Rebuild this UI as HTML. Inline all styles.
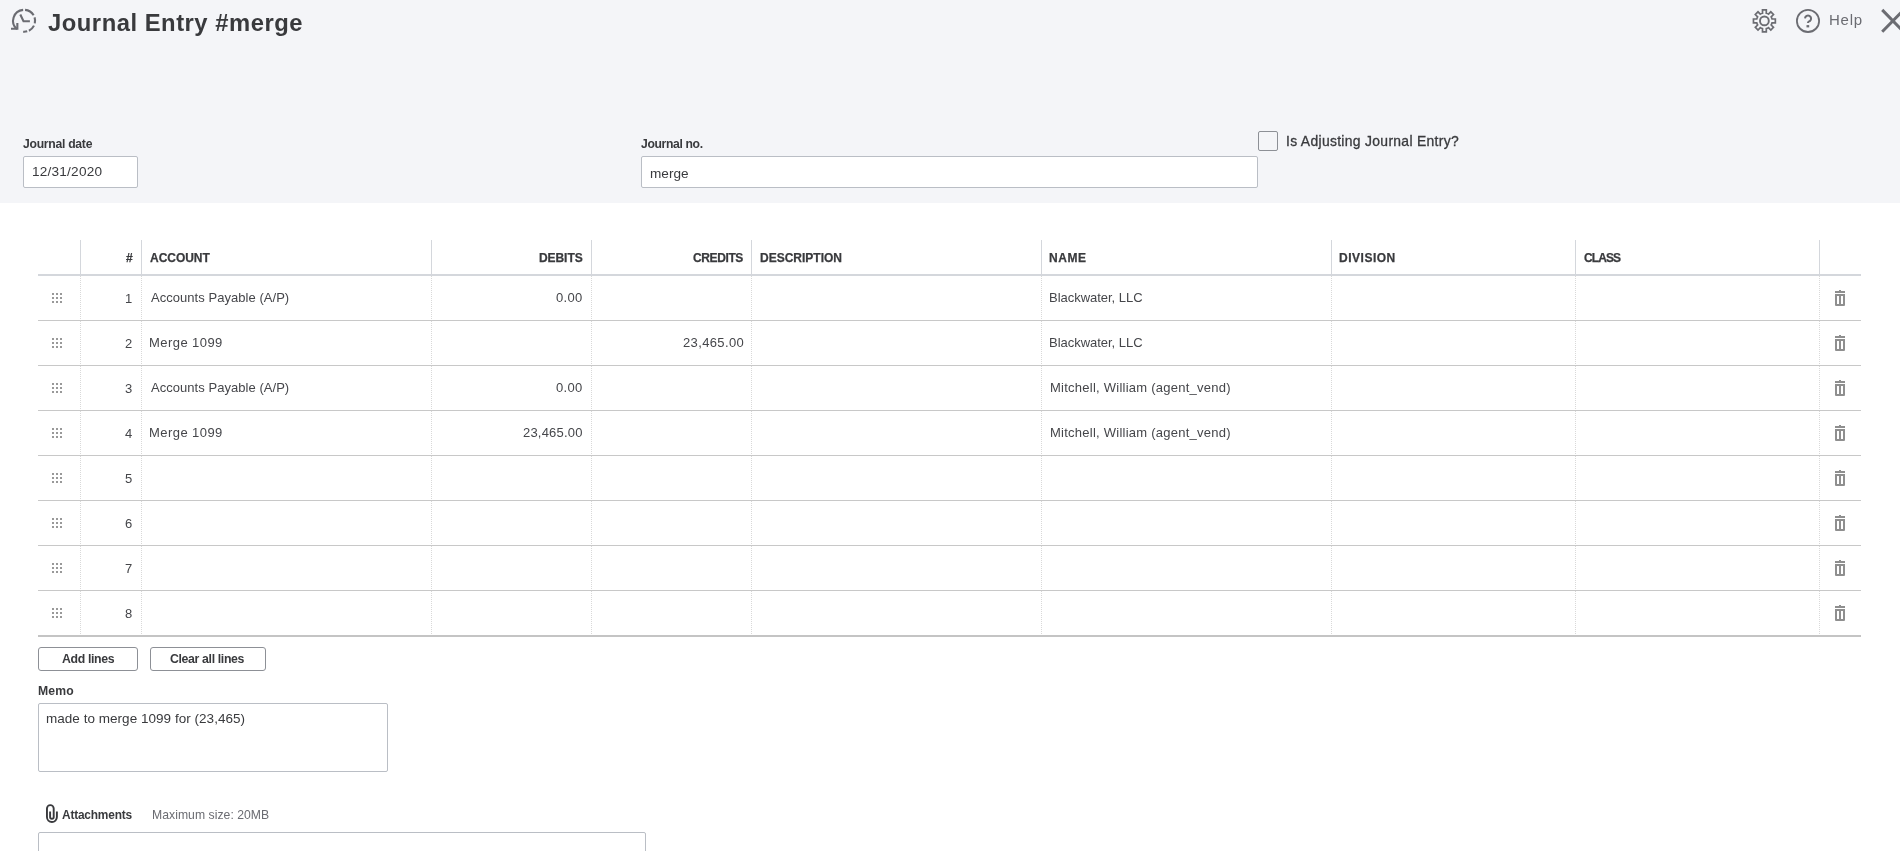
<!DOCTYPE html>
<html><head><meta charset="utf-8">
<style>
*{box-sizing:border-box;margin:0;padding:0}
html,body{width:1900px;height:851px;overflow:hidden;background:#fff;font-family:"Liberation Sans",sans-serif;color:#393a3d}
.abs{position:absolute}
#top{position:absolute;left:0;top:0;width:1900px;height:203px;background:#f4f5f8}
.t{position:absolute;white-space:nowrap;line-height:1;will-change:transform}
.title{left:49px;top:12px;font-size:24.9px;font-weight:bold;color:#393a3d}
.lbl{font-size:11.6px;font-weight:bold;color:#393a3d}
.inp{position:absolute;background:#fff;border:1px solid #babec5;border-radius:2px}
.inpt{font-size:13.6px;color:#393a3d}
.hl{position:absolute;background:#dcdfe4}
.th{position:absolute;top:252px;font-size:11.8px;font-weight:bold;color:#393a3d;white-space:nowrap;line-height:1}
.td{position:absolute;font-size:13px;color:#393a3d;white-space:nowrap;line-height:1}
.dl{position:absolute;width:1px;background-image:linear-gradient(#d9d9d9 50%,transparent 50%);background-size:1px 2px}
.btn{position:absolute;top:647px;height:24px;border:1px solid #8d9096;border-radius:3px;background:#fff}
</style></head><body>
<div id="top"></div>

<!-- history icon -->
<svg class="abs" style="left:0;top:0" width="50" height="45" viewBox="0 0 50 45"><g fill="none" stroke="#6b6c72" stroke-width="2.1">
<path d="M23.14 9.84A11 11 0 0 0 17.03 29.23"/><path d="M25.06 9.84A11 11 0 0 1 33.63 15.30M34.56 17.40A11 11 0 0 1 34.80 23.37M33.99 25.62A11 11 0 0 1 28.92 30.69M27.21 31.35A11 11 0 0 1 23.14 31.76"/><path d="M17.35 23.1V28.8H11"/><path d="M20.3 14.5L23.5 21.3H29.9"/></g></svg>


<!-- right icons -->
<svg class="abs" style="left:1740px;top:0" width="160" height="45" viewBox="1740 0 160 45"><g fill="none" stroke="#6b6c72">
<path stroke-width="1.7" d="M1762.50 13.23L1762.50 9.96L1766.30 9.96L1766.30 13.23A7.9 7.9 0 0 1 1768.48 14.13L1770.79 11.82L1773.48 14.51L1771.17 16.82A7.9 7.9 0 0 1 1772.07 19.00L1775.34 19.00L1775.34 22.80L1772.07 22.80A7.9 7.9 0 0 1 1771.17 24.98L1773.48 27.29L1770.79 29.98L1768.48 27.67A7.9 7.9 0 0 1 1766.30 28.57L1766.30 31.84L1762.50 31.84L1762.50 28.57A7.9 7.9 0 0 1 1760.32 27.67L1758.01 29.98L1755.32 27.29L1757.63 24.98A7.9 7.9 0 0 1 1756.73 22.80L1753.46 22.80L1753.46 19.00L1756.73 19.00A7.9 7.9 0 0 1 1757.63 16.82L1755.32 14.51L1758.01 11.82L1760.32 14.13A7.9 7.9 0 0 1 1762.50 13.23Z"/><circle cx="1764.4" cy="20.9" r="4.4" stroke-width="1.9"/>
<circle cx="1808" cy="20.9" r="11.1" stroke-width="1.8"/>
<path stroke-width="2" d="M1805 18.3A3.05 3.05 0 1 1 1810 20.9C1808.5 21.8 1807.9 22 1807.9 23.1"/>
<path stroke-width="3" d="M1882.2 9.9L1903.6 31.7M1882.2 31.7L1903.6 9.9"/></g>
<rect x="1806.5" y="25.1" width="2.7" height="2.3" fill="#6b6c72"/></svg>

<div class="inp" style="left:23px;top:156px;width:115px;height:32px"></div>

<div class="inp" style="left:641px;top:156px;width:617px;height:32px"></div>

<div class="inp" style="left:1258px;top:131px;width:20px;height:20px;border-radius:2px;background:transparent;border-color:#8d9096"></div>

<div class="hl" style="left:80px;top:240px;width:1px;height:34px;background:#d4d7dc"></div>
<div class="hl" style="left:141px;top:240px;width:1px;height:34px;background:#d4d7dc"></div>
<div class="hl" style="left:431px;top:240px;width:1px;height:34px;background:#d4d7dc"></div>
<div class="hl" style="left:591px;top:240px;width:1px;height:34px;background:#d4d7dc"></div>
<div class="hl" style="left:751px;top:240px;width:1px;height:34px;background:#d4d7dc"></div>
<div class="hl" style="left:1041px;top:240px;width:1px;height:34px;background:#d4d7dc"></div>
<div class="hl" style="left:1331px;top:240px;width:1px;height:34px;background:#d4d7dc"></div>
<div class="hl" style="left:1575px;top:240px;width:1px;height:34px;background:#d4d7dc"></div>
<div class="hl" style="left:1819px;top:240px;width:1px;height:34px;background:#d4d7dc"></div>
<div class="hl" style="left:38px;top:274px;width:1823px;height:2px;background:#d4d7dc"></div>
<div class="dl" style="left:80px;top:276px;height:44px"></div>
<div class="dl" style="left:141px;top:276px;height:44px"></div>
<div class="dl" style="left:431px;top:276px;height:44px"></div>
<div class="dl" style="left:591px;top:276px;height:44px"></div>
<div class="dl" style="left:751px;top:276px;height:44px"></div>
<div class="dl" style="left:1041px;top:276px;height:44px"></div>
<div class="dl" style="left:1331px;top:276px;height:44px"></div>
<div class="dl" style="left:1575px;top:276px;height:44px"></div>
<div class="dl" style="left:1819px;top:276px;height:44px"></div>
<div class="hl" style="left:38px;top:320px;width:1823px;height:1px;background:#c8c8c8"></div>
<svg class="abs" style="left:52px;top:293px" width="10" height="10" viewBox="0 0 10 10"><g fill="#999"><rect x="0" y="0" width="2" height="2"/><rect x="0" y="4" width="2" height="2"/><rect x="0" y="8" width="2" height="2"/><rect x="4" y="0" width="2" height="2"/><rect x="4" y="4" width="2" height="2"/><rect x="4" y="8" width="2" height="2"/><rect x="8" y="0" width="2" height="2"/><rect x="8" y="4" width="2" height="2"/><rect x="8" y="8" width="2" height="2"/></g></svg>
<svg class="abs" style="left:1834px;top:289px" width="12" height="18" viewBox="0 0 12 18"><g fill="#8f8f8f"><rect x="1" y="2" width="10" height="2"/><rect x="5" y="1" width="2" height="1"/><path d="M1 5h10v11a1 1 0 0 1-1 1H2a1 1 0 0 1-1-1z M3 7v8h2V7z M7 7v8h2V7z" fill-rule="evenodd"/></g></svg>
<div class="dl" style="left:80px;top:321px;height:44px"></div>
<div class="dl" style="left:141px;top:321px;height:44px"></div>
<div class="dl" style="left:431px;top:321px;height:44px"></div>
<div class="dl" style="left:591px;top:321px;height:44px"></div>
<div class="dl" style="left:751px;top:321px;height:44px"></div>
<div class="dl" style="left:1041px;top:321px;height:44px"></div>
<div class="dl" style="left:1331px;top:321px;height:44px"></div>
<div class="dl" style="left:1575px;top:321px;height:44px"></div>
<div class="dl" style="left:1819px;top:321px;height:44px"></div>
<div class="hl" style="left:38px;top:365px;width:1823px;height:1px;background:#c8c8c8"></div>
<svg class="abs" style="left:52px;top:338px" width="10" height="10" viewBox="0 0 10 10"><g fill="#999"><rect x="0" y="0" width="2" height="2"/><rect x="0" y="4" width="2" height="2"/><rect x="0" y="8" width="2" height="2"/><rect x="4" y="0" width="2" height="2"/><rect x="4" y="4" width="2" height="2"/><rect x="4" y="8" width="2" height="2"/><rect x="8" y="0" width="2" height="2"/><rect x="8" y="4" width="2" height="2"/><rect x="8" y="8" width="2" height="2"/></g></svg>
<svg class="abs" style="left:1834px;top:334px" width="12" height="18" viewBox="0 0 12 18"><g fill="#8f8f8f"><rect x="1" y="2" width="10" height="2"/><rect x="5" y="1" width="2" height="1"/><path d="M1 5h10v11a1 1 0 0 1-1 1H2a1 1 0 0 1-1-1z M3 7v8h2V7z M7 7v8h2V7z" fill-rule="evenodd"/></g></svg>
<div class="dl" style="left:80px;top:366px;height:44px"></div>
<div class="dl" style="left:141px;top:366px;height:44px"></div>
<div class="dl" style="left:431px;top:366px;height:44px"></div>
<div class="dl" style="left:591px;top:366px;height:44px"></div>
<div class="dl" style="left:751px;top:366px;height:44px"></div>
<div class="dl" style="left:1041px;top:366px;height:44px"></div>
<div class="dl" style="left:1331px;top:366px;height:44px"></div>
<div class="dl" style="left:1575px;top:366px;height:44px"></div>
<div class="dl" style="left:1819px;top:366px;height:44px"></div>
<div class="hl" style="left:38px;top:410px;width:1823px;height:1px;background:#c8c8c8"></div>
<svg class="abs" style="left:52px;top:383px" width="10" height="10" viewBox="0 0 10 10"><g fill="#999"><rect x="0" y="0" width="2" height="2"/><rect x="0" y="4" width="2" height="2"/><rect x="0" y="8" width="2" height="2"/><rect x="4" y="0" width="2" height="2"/><rect x="4" y="4" width="2" height="2"/><rect x="4" y="8" width="2" height="2"/><rect x="8" y="0" width="2" height="2"/><rect x="8" y="4" width="2" height="2"/><rect x="8" y="8" width="2" height="2"/></g></svg>
<svg class="abs" style="left:1834px;top:379px" width="12" height="18" viewBox="0 0 12 18"><g fill="#8f8f8f"><rect x="1" y="2" width="10" height="2"/><rect x="5" y="1" width="2" height="1"/><path d="M1 5h10v11a1 1 0 0 1-1 1H2a1 1 0 0 1-1-1z M3 7v8h2V7z M7 7v8h2V7z" fill-rule="evenodd"/></g></svg>
<div class="dl" style="left:80px;top:411px;height:44px"></div>
<div class="dl" style="left:141px;top:411px;height:44px"></div>
<div class="dl" style="left:431px;top:411px;height:44px"></div>
<div class="dl" style="left:591px;top:411px;height:44px"></div>
<div class="dl" style="left:751px;top:411px;height:44px"></div>
<div class="dl" style="left:1041px;top:411px;height:44px"></div>
<div class="dl" style="left:1331px;top:411px;height:44px"></div>
<div class="dl" style="left:1575px;top:411px;height:44px"></div>
<div class="dl" style="left:1819px;top:411px;height:44px"></div>
<div class="hl" style="left:38px;top:455px;width:1823px;height:1px;background:#c8c8c8"></div>
<svg class="abs" style="left:52px;top:428px" width="10" height="10" viewBox="0 0 10 10"><g fill="#999"><rect x="0" y="0" width="2" height="2"/><rect x="0" y="4" width="2" height="2"/><rect x="0" y="8" width="2" height="2"/><rect x="4" y="0" width="2" height="2"/><rect x="4" y="4" width="2" height="2"/><rect x="4" y="8" width="2" height="2"/><rect x="8" y="0" width="2" height="2"/><rect x="8" y="4" width="2" height="2"/><rect x="8" y="8" width="2" height="2"/></g></svg>
<svg class="abs" style="left:1834px;top:424px" width="12" height="18" viewBox="0 0 12 18"><g fill="#8f8f8f"><rect x="1" y="2" width="10" height="2"/><rect x="5" y="1" width="2" height="1"/><path d="M1 5h10v11a1 1 0 0 1-1 1H2a1 1 0 0 1-1-1z M3 7v8h2V7z M7 7v8h2V7z" fill-rule="evenodd"/></g></svg>
<div class="dl" style="left:80px;top:456px;height:44px"></div>
<div class="dl" style="left:141px;top:456px;height:44px"></div>
<div class="dl" style="left:431px;top:456px;height:44px"></div>
<div class="dl" style="left:591px;top:456px;height:44px"></div>
<div class="dl" style="left:751px;top:456px;height:44px"></div>
<div class="dl" style="left:1041px;top:456px;height:44px"></div>
<div class="dl" style="left:1331px;top:456px;height:44px"></div>
<div class="dl" style="left:1575px;top:456px;height:44px"></div>
<div class="dl" style="left:1819px;top:456px;height:44px"></div>
<div class="hl" style="left:38px;top:500px;width:1823px;height:1px;background:#c8c8c8"></div>
<svg class="abs" style="left:52px;top:473px" width="10" height="10" viewBox="0 0 10 10"><g fill="#999"><rect x="0" y="0" width="2" height="2"/><rect x="0" y="4" width="2" height="2"/><rect x="0" y="8" width="2" height="2"/><rect x="4" y="0" width="2" height="2"/><rect x="4" y="4" width="2" height="2"/><rect x="4" y="8" width="2" height="2"/><rect x="8" y="0" width="2" height="2"/><rect x="8" y="4" width="2" height="2"/><rect x="8" y="8" width="2" height="2"/></g></svg>
<svg class="abs" style="left:1834px;top:469px" width="12" height="18" viewBox="0 0 12 18"><g fill="#8f8f8f"><rect x="1" y="2" width="10" height="2"/><rect x="5" y="1" width="2" height="1"/><path d="M1 5h10v11a1 1 0 0 1-1 1H2a1 1 0 0 1-1-1z M3 7v8h2V7z M7 7v8h2V7z" fill-rule="evenodd"/></g></svg>
<div class="dl" style="left:80px;top:501px;height:44px"></div>
<div class="dl" style="left:141px;top:501px;height:44px"></div>
<div class="dl" style="left:431px;top:501px;height:44px"></div>
<div class="dl" style="left:591px;top:501px;height:44px"></div>
<div class="dl" style="left:751px;top:501px;height:44px"></div>
<div class="dl" style="left:1041px;top:501px;height:44px"></div>
<div class="dl" style="left:1331px;top:501px;height:44px"></div>
<div class="dl" style="left:1575px;top:501px;height:44px"></div>
<div class="dl" style="left:1819px;top:501px;height:44px"></div>
<div class="hl" style="left:38px;top:545px;width:1823px;height:1px;background:#c8c8c8"></div>
<svg class="abs" style="left:52px;top:518px" width="10" height="10" viewBox="0 0 10 10"><g fill="#999"><rect x="0" y="0" width="2" height="2"/><rect x="0" y="4" width="2" height="2"/><rect x="0" y="8" width="2" height="2"/><rect x="4" y="0" width="2" height="2"/><rect x="4" y="4" width="2" height="2"/><rect x="4" y="8" width="2" height="2"/><rect x="8" y="0" width="2" height="2"/><rect x="8" y="4" width="2" height="2"/><rect x="8" y="8" width="2" height="2"/></g></svg>
<svg class="abs" style="left:1834px;top:514px" width="12" height="18" viewBox="0 0 12 18"><g fill="#8f8f8f"><rect x="1" y="2" width="10" height="2"/><rect x="5" y="1" width="2" height="1"/><path d="M1 5h10v11a1 1 0 0 1-1 1H2a1 1 0 0 1-1-1z M3 7v8h2V7z M7 7v8h2V7z" fill-rule="evenodd"/></g></svg>
<div class="dl" style="left:80px;top:546px;height:44px"></div>
<div class="dl" style="left:141px;top:546px;height:44px"></div>
<div class="dl" style="left:431px;top:546px;height:44px"></div>
<div class="dl" style="left:591px;top:546px;height:44px"></div>
<div class="dl" style="left:751px;top:546px;height:44px"></div>
<div class="dl" style="left:1041px;top:546px;height:44px"></div>
<div class="dl" style="left:1331px;top:546px;height:44px"></div>
<div class="dl" style="left:1575px;top:546px;height:44px"></div>
<div class="dl" style="left:1819px;top:546px;height:44px"></div>
<div class="hl" style="left:38px;top:590px;width:1823px;height:1px;background:#c8c8c8"></div>
<svg class="abs" style="left:52px;top:563px" width="10" height="10" viewBox="0 0 10 10"><g fill="#999"><rect x="0" y="0" width="2" height="2"/><rect x="0" y="4" width="2" height="2"/><rect x="0" y="8" width="2" height="2"/><rect x="4" y="0" width="2" height="2"/><rect x="4" y="4" width="2" height="2"/><rect x="4" y="8" width="2" height="2"/><rect x="8" y="0" width="2" height="2"/><rect x="8" y="4" width="2" height="2"/><rect x="8" y="8" width="2" height="2"/></g></svg>
<svg class="abs" style="left:1834px;top:559px" width="12" height="18" viewBox="0 0 12 18"><g fill="#8f8f8f"><rect x="1" y="2" width="10" height="2"/><rect x="5" y="1" width="2" height="1"/><path d="M1 5h10v11a1 1 0 0 1-1 1H2a1 1 0 0 1-1-1z M3 7v8h2V7z M7 7v8h2V7z" fill-rule="evenodd"/></g></svg>
<div class="dl" style="left:80px;top:591px;height:44px"></div>
<div class="dl" style="left:141px;top:591px;height:44px"></div>
<div class="dl" style="left:431px;top:591px;height:44px"></div>
<div class="dl" style="left:591px;top:591px;height:44px"></div>
<div class="dl" style="left:751px;top:591px;height:44px"></div>
<div class="dl" style="left:1041px;top:591px;height:44px"></div>
<div class="dl" style="left:1331px;top:591px;height:44px"></div>
<div class="dl" style="left:1575px;top:591px;height:44px"></div>
<div class="dl" style="left:1819px;top:591px;height:44px"></div>
<svg class="abs" style="left:52px;top:608px" width="10" height="10" viewBox="0 0 10 10"><g fill="#999"><rect x="0" y="0" width="2" height="2"/><rect x="0" y="4" width="2" height="2"/><rect x="0" y="8" width="2" height="2"/><rect x="4" y="0" width="2" height="2"/><rect x="4" y="4" width="2" height="2"/><rect x="4" y="8" width="2" height="2"/><rect x="8" y="0" width="2" height="2"/><rect x="8" y="4" width="2" height="2"/><rect x="8" y="8" width="2" height="2"/></g></svg>
<svg class="abs" style="left:1834px;top:604px" width="12" height="18" viewBox="0 0 12 18"><g fill="#8f8f8f"><rect x="1" y="2" width="10" height="2"/><rect x="5" y="1" width="2" height="1"/><path d="M1 5h10v11a1 1 0 0 1-1 1H2a1 1 0 0 1-1-1z M3 7v8h2V7z M7 7v8h2V7z" fill-rule="evenodd"/></g></svg>
<div class="hl" style="left:38px;top:635px;width:1823px;height:2px;background:#c4c4c4"></div>

<div class="btn" style="left:38px;width:100px"></div>
<div class="btn" style="left:150px;width:116px"></div>

<div class="inp" style="left:38px;top:703px;width:350px;height:69px"></div>

<svg class="abs" style="left:30px;top:795px" width="40" height="35" viewBox="30 795 40 35"><path fill="none" stroke="#393a3d" stroke-width="1.9" d="M56.9 811.4V817.1A4.97 4.97 0 0 1 46.96 817.1V808.5A3.37 3.37 0 0 1 53.7 808.5V817A1.8 1.8 0 0 1 50.1 817V811.4"/></svg>
<div class="inp" style="left:38px;top:832px;width:608px;height:40px"></div>
<div class="t" style="left:48.20px;top:11.30px;font-size:23.8px;font-weight:bold;color:#393a3d;letter-spacing:0.518px">Journal Entry #merge</div>
<div class="t" style="left:22.94px;top:138.36px;font-size:12.2px;font-weight:bold;color:#393a3d;letter-spacing:-0.278px">Journal date</div>
<div class="t" style="left:31.62px;top:165.44px;font-size:13.6px;font-weight:normal;color:#393a3d;letter-spacing:0.220px">12/31/2020</div>
<div class="t" style="left:641.10px;top:138.36px;font-size:12.2px;font-weight:bold;color:#393a3d;letter-spacing:-0.360px">Journal no.</div>
<div class="t" style="left:650.20px;top:166.64px;font-size:13.6px;font-weight:normal;color:#393a3d;letter-spacing:0.000px">merge</div>
<div class="t" style="left:1285.54px;top:135.02px;font-size:13.9px;font-weight:normal;color:#393a3d;letter-spacing:0.318px;-webkit-text-stroke:0.3px #393a3d">Is Adjusting Journal Entry?</div>
<div class="t" style="left:1828.96px;top:12.00px;font-size:15px;font-weight:normal;color:#6b6c72;letter-spacing:0.780px">Help</div>
<div class="t" style="left:126.02px;top:251.50px;font-size:12px;font-weight:bold;color:#393a3d;letter-spacing:-14.580px;-webkit-text-stroke:0.25px #393a3d">#</div>
<div class="t" style="left:149.94px;top:251.50px;font-size:12px;font-weight:bold;color:#393a3d;letter-spacing:-0.030px;-webkit-text-stroke:0.25px #393a3d">ACCOUNT</div>
<div class="t" style="left:539.46px;top:251.50px;font-size:12px;font-weight:bold;color:#393a3d;letter-spacing:-0.072px;-webkit-text-stroke:0.25px #393a3d">DEBITS</div>
<div class="t" style="left:692.52px;top:251.50px;font-size:12px;font-weight:bold;color:#393a3d;letter-spacing:-0.390px;-webkit-text-stroke:0.25px #393a3d">CREDITS</div>
<div class="t" style="left:759.70px;top:251.50px;font-size:12px;font-weight:bold;color:#393a3d;letter-spacing:0.000px;-webkit-text-stroke:0.25px #393a3d">DESCRIPTION</div>
<div class="t" style="left:1048.96px;top:251.50px;font-size:12px;font-weight:bold;color:#393a3d;letter-spacing:0.540px;-webkit-text-stroke:0.25px #393a3d">NAME</div>
<div class="t" style="left:1339.20px;top:251.50px;font-size:12px;font-weight:bold;color:#393a3d;letter-spacing:0.514px;-webkit-text-stroke:0.25px #393a3d">DIVISION</div>
<div class="t" style="left:1584.10px;top:251.50px;font-size:12px;font-weight:bold;color:#393a3d;letter-spacing:-0.900px;-webkit-text-stroke:0.25px #393a3d">CLASS</div>
<div class="t" style="left:61.94px;top:653.18px;font-size:12.3px;font-weight:bold;color:#393a3d;letter-spacing:-0.338px">Add lines</div>
<div class="t" style="left:170.36px;top:653.18px;font-size:12.3px;font-weight:bold;color:#393a3d;letter-spacing:-0.347px">Clear all lines</div>
<div class="t" style="left:38.20px;top:684.54px;font-size:12.2px;font-weight:bold;color:#393a3d;letter-spacing:0.120px">Memo</div>
<div class="t" style="left:46.46px;top:712.32px;font-size:13.5px;font-weight:normal;color:#393a3d;letter-spacing:0.030px">made to merge 1099 for (23,465)</div>
<div class="t" style="left:61.64px;top:809.88px;font-size:11.9px;font-weight:bold;color:#393a3d;letter-spacing:-0.192px">Attachments</div>
<div class="t" style="left:152.46px;top:809.28px;font-size:12.2px;font-weight:normal;color:#6b6c72;letter-spacing:0.042px">Maximum size: 20MB</div>
<div class="t" style="left:150.52px;top:291.48px;font-size:13px;font-weight:normal;color:#45464a;letter-spacing:0.043px">Accounts Payable (A/P)</div>
<div class="t" style="left:1048.96px;top:291.48px;font-size:13px;font-weight:normal;color:#45464a;letter-spacing:-0.026px">Blackwater, LLC</div>
<div class="t" style="left:556.20px;top:291.48px;font-size:13px;font-weight:normal;color:#45464a;letter-spacing:0.300px">0.00</div>
<div class="t" style="left:149.04px;top:336.48px;font-size:13px;font-weight:normal;color:#45464a;letter-spacing:0.440px">Merge 1099</div>
<div class="t" style="left:1048.96px;top:336.48px;font-size:13px;font-weight:normal;color:#45464a;letter-spacing:-0.026px">Blackwater, LLC</div>
<div class="t" style="left:682.70px;top:336.48px;font-size:13px;font-weight:normal;color:#45464a;letter-spacing:0.360px">23,465.00</div>
<div class="t" style="left:150.52px;top:381.48px;font-size:13px;font-weight:normal;color:#45464a;letter-spacing:0.043px">Accounts Payable (A/P)</div>
<div class="t" style="left:1049.70px;top:381.48px;font-size:13px;font-weight:normal;color:#45464a;letter-spacing:0.248px">Mitchell, William (agent_vend)</div>
<div class="t" style="left:556.20px;top:381.48px;font-size:13px;font-weight:normal;color:#45464a;letter-spacing:0.300px">0.00</div>
<div class="t" style="left:149.04px;top:426.48px;font-size:13px;font-weight:normal;color:#45464a;letter-spacing:0.440px">Merge 1099</div>
<div class="t" style="left:1049.70px;top:426.48px;font-size:13px;font-weight:normal;color:#45464a;letter-spacing:0.248px">Mitchell, William (agent_vend)</div>
<div class="t" style="left:523.20px;top:426.48px;font-size:13px;font-weight:normal;color:#45464a;letter-spacing:0.203px">23,465.00</div>
<div class="t" style="right:1767.5px;top:292.30px;font-size:13px;color:#45464a">1</div>
<div class="t" style="right:1767.5px;top:337.30px;font-size:13px;color:#45464a">2</div>
<div class="t" style="right:1767.5px;top:382.30px;font-size:13px;color:#45464a">3</div>
<div class="t" style="right:1767.5px;top:427.30px;font-size:13px;color:#45464a">4</div>
<div class="t" style="right:1767.5px;top:472.30px;font-size:13px;color:#45464a">5</div>
<div class="t" style="right:1767.5px;top:517.30px;font-size:13px;color:#45464a">6</div>
<div class="t" style="right:1767.5px;top:562.30px;font-size:13px;color:#45464a">7</div>
<div class="t" style="right:1767.5px;top:607.30px;font-size:13px;color:#45464a">8</div>
</body></html>
